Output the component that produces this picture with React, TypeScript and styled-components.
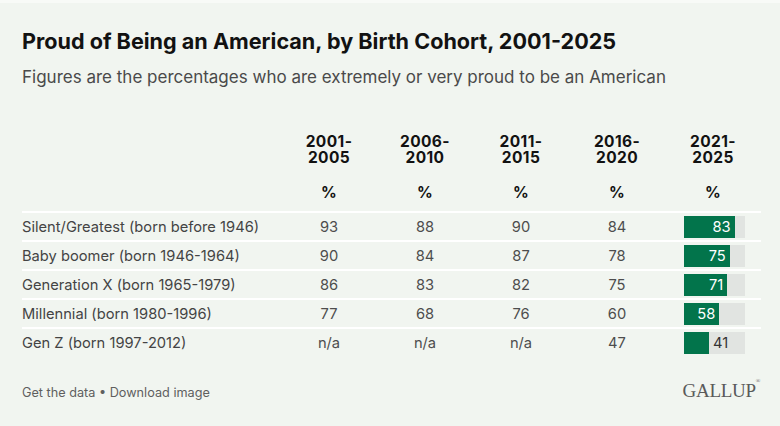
import React from "react";
import styled, { createGlobalStyle } from "styled-components";

const Global = createGlobalStyle`
  html, body { margin: 0; padding: 0; background: #f1f5f0; }
  body { font-family: Inter, "Noto Sans", "Liberation Sans", sans-serif; }
`;

const Page = styled.div`
  width: 780px;
  height: 426px;
  box-sizing: border-box;
  background: #f1f5f0;
  border-top: 3px solid #f8faf7;
  padding: 26px 19px 0 22px;
  display: flex;
  flex-direction: column;
`;

const Title = styled.h1`
  margin: 0;
  font-size: 21.6px;
  line-height: 24px;
  font-weight: 700;
  color: #121212;
  letter-spacing: 0;
  white-space: nowrap;
`;

const Subtitle = styled.p`
  margin: 14px 0 0;
  font-size: 17px;
  line-height: 20px;
  color: #4a4a4a;
  white-space: nowrap;
`;

const Table = styled.div`
  margin-top: 47px;
  display: flex;
  flex-direction: column;
`;

const Grid = styled.div<{ $line?: boolean }>`
  display: grid;
  grid-template-columns: 259px repeat(5, 96px);
  align-items: center;
  border-top: ${(p) => (p.$line ? "2px solid #ffffff" : "none")};
`;

const HeadCell = styled.div`
  text-align: center;
  font-size: 15.5px;
  line-height: 16px;
  font-weight: 700;
  color: #121212;
  letter-spacing: 0.4px;
`;

const PctRow = styled(Grid)`
  margin-top: 19px;
  margin-bottom: 10px;
`;

const DataRow = styled(Grid)`
  height: 27px;
`;

const Label = styled.div`
  font-size: 14.7px;
  color: #444;
  white-space: nowrap;
`;

const Num = styled.div`
  text-align: center;
  font-size: 14.7px;
  color: #4d4d4d;
`;

const BarCell = styled.div`
  padding-left: 19px;
  display: flex;
  align-items: center;
`;

const Track = styled.div`
  width: 61px;
  height: 22px;
  background: #e1e4e1;
  display: flex;
  align-items: center;
`;

const Fill = styled.div`
  height: 100%;
  background: #02744b;
  display: flex;
  align-items: center;
  justify-content: flex-end;
  box-sizing: border-box;
  padding-right: 4px;
`;

const BarValue = styled.span<{ $inside: boolean }>`
  font-size: 14.7px;
  color: ${(p) => (p.$inside ? "#ffffff" : "#333333")};
  padding-left: ${(p) => (p.$inside ? "0" : "4px")};
`;

const Footer = styled.div`
  margin-top: 24px;
  display: flex;
  justify-content: space-between;
  align-items: baseline;
  padding-right: 1px;
`;

const Links = styled.div`
  font-size: 12.7px;
  color: #5f5f5f;
`;

const Logo = styled.div`
  font-family: "Liberation Serif", "Times New Roman", serif;
  font-size: 19px;
  color: #5a5a5a;
  letter-spacing: -0.3px;
`;

const Reg = styled.sup`
  font-size: 6px;
  vertical-align: top;
  position: relative;
  top: -2px;
`;

const periods = ["2001-\n2005", "2006-\n2010", "2011-\n2015", "2016-\n2020", "2021-\n2025"];

const rows: [string, string, string, string, string, number][] = [
  ["Silent/Greatest (born before 1946)", "93", "88", "90", "84", 83],
  ["Baby boomer (born 1946-1964)", "90", "84", "87", "78", 75],
  ["Generation X (born 1965-1979)", "86", "83", "82", "75", 71],
  ["Millennial (born 1980-1996)", "77", "68", "76", "60", 58],
  ["Gen Z (born 1997-2012)", "n/a", "n/a", "n/a", "47", 41],
];

export default function App() {
  return (
    <Page>
      <Global />
      <Title>Proud of Being an American, by Birth Cohort, 2001-2025</Title>
      <Subtitle>Figures are the percentages who are extremely or very proud to be an American</Subtitle>
      <Table>
        <Grid>
          <div />
          {periods.map((p) => {
            const [a, b] = p.split("\n");
            return (
              <HeadCell key={p}>
                {a}
                <br />
                {b}
              </HeadCell>
            );
          })}
        </Grid>
        <PctRow>
          <div />
          {periods.map((p) => (
            <HeadCell key={p}>%</HeadCell>
          ))}
        </PctRow>
        {rows.map((r) => {
          const v = r[5];
          const inside = v >= 50;
          return (
            <DataRow key={r[0]} $line>
              <Label>{r[0]}</Label>
              <Num>{r[1]}</Num>
              <Num>{r[2]}</Num>
              <Num>{r[3]}</Num>
              <Num>{r[4]}</Num>
              <BarCell>
                <Track>
                  <Fill style={{ width: `${v}%` }}>
                    {inside && <BarValue $inside>{v}</BarValue>}
                  </Fill>
                  {!inside && <BarValue $inside={false}>{v}</BarValue>}
                </Track>
              </BarCell>
            </DataRow>
          );
        })}
      </Table>
      <Footer>
        <Links>Get the data • Download image</Links>
        <Logo>
          GALLUP<Reg>®</Reg>
        </Logo>
      </Footer>
    </Page>
  );
}
